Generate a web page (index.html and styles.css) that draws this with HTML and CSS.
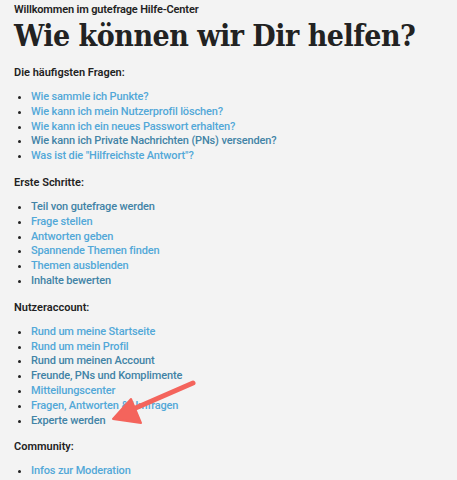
FILE: index.html
```html
<!DOCTYPE html>
<html lang="de">
<head>
<meta charset="utf-8">
<link rel="stylesheet" href="styles.css">
</head>
<body>
<div class="page">
  <div class="welcome">Willkommen im gutefrage Hilfe-Center</div>
  <h1 class="title">Wie können wir Dir helfen?</h1>

  <h2 class="section">Die häufigsten Fragen:</h2>
  <ul class="links">
    <li><a class="link">Wie sammle ich Punkte?</a></li>
    <li><a class="link">Wie kann ich mein Nutzerprofil löschen?</a></li>
    <li><a class="link">Wie kann ich ein neues Passwort erhalten?</a></li>
    <li><a class="link visited">Wie kann ich Private Nachrichten (PNs) versenden?</a></li>
    <li><a class="link">Was ist die "Hilfreichste Antwort"?</a></li>
  </ul>

  <h2 class="section">Erste Schritte:</h2>
  <ul class="links">
    <li><a class="link visited">Teil von gutefrage werden</a></li>
    <li><a class="link">Frage stellen</a></li>
    <li><a class="link">Antworten geben</a></li>
    <li><a class="link">Spannende Themen finden</a></li>
    <li><a class="link">Themen ausblenden</a></li>
    <li><a class="link visited">Inhalte bewerten</a></li>
  </ul>

  <h2 class="section">Nutzeraccount:</h2>
  <ul class="links">
    <li><a class="link">Rund um meine Startseite</a></li>
    <li><a class="link">Rund um mein Profil</a></li>
    <li><a class="link visited">Rund um meinen Account</a></li>
    <li><a class="link visited">Freunde, PNs und Komplimente</a></li>
    <li><a class="link">Mitteilungscenter</a></li>
    <li><a class="link">Fragen, Antworten &amp; Umfragen</a></li>
    <li><a class="link visited">Experte werden</a></li>
  </ul>

  <h2 class="section">Community:</h2>
  <ul class="links">
    <li><a class="link">Infos zur Moderation</a></li>
  </ul>

  <svg class="arrow" width="100" height="60" viewBox="0 0 100 60">
    <line x1="92" y1="6" x2="30" y2="33" stroke="#f4645c" stroke-width="5" stroke-linecap="round"/>
    <polygon points="12,42 30,22 40,46" fill="#f4645c" stroke="#f4645c" stroke-width="2" stroke-linejoin="round"/>
  </svg>
</div>
</body>
</html>
```
FILE: styles.css
```css
html, body {
  margin: 0;
  padding: 0;
  background: #f3f3f3;
}
.page {
  position: relative;
  padding: 3px 14px 0 14px;
  font-family: Roboto, "Noto Sans", sans-serif;
  color: #222;
  height: 480px;
  box-sizing: border-box;
  overflow: hidden;
}
.welcome {
  font-size: 11px;
  font-weight: 600;
  line-height: 14px;
  letter-spacing: -0.15px;
  color: #222;
}
.title {
  margin: 1px 0 0 0;
  font-family: "DejaVu Serif", serif;
  font-stretch: condensed;
  font-weight: bold;
  font-size: 30px;
  line-height: 36px;
  color: #222;
  letter-spacing: -0.5px;
  white-space: nowrap;
}
.section {
  margin: 11px 0 0 0;
  font-size: 11px;
  font-weight: 600;
  line-height: 15px;
  color: #222;
}
.title + .section {
  margin-top: 11px;
}
.links {
  margin: 10px 0 0 0;
  padding: 0 0 0 17px;
  list-style: disc;
}
.links li {
  font-size: 11px;
  line-height: 14.8px;
  color: #222;
}
.link {
  color: #52a8d8;
  font-weight: 500;
  letter-spacing: -0.14px;
}
.visited {
  color: #4283a6;
}
.arrow {
  position: absolute;
  left: 101px;
  top: 377px;
}
```
